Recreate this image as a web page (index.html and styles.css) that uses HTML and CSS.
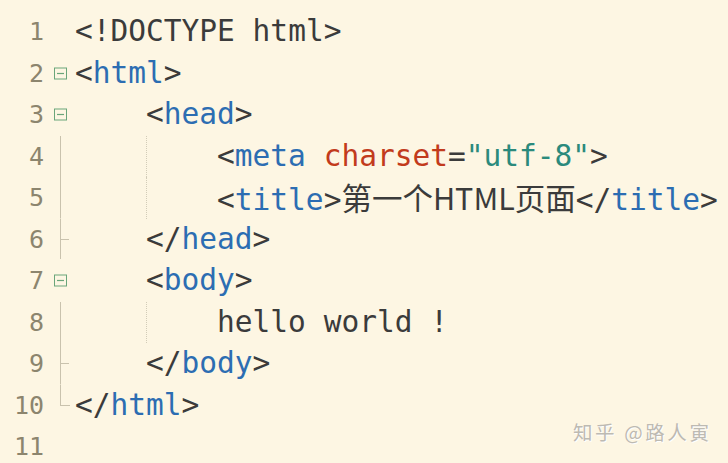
FILE: index.html
```html
<!DOCTYPE html>
<html lang="zh">
<head>
<meta charset="utf-8">
<title>code</title>
<link rel="stylesheet" href="styles.css">
</head>
<body>
<div class="editor">
  <div class="line"><span class="num">1</span><span class="fold"></span><span class="code"><span class="p">&lt;!DOCTYPE html&gt;</span></span></div>
  <div class="line"><span class="num">2</span><span class="fold"><svg width="31" height="41.5"><rect x="10.5" y="15" width="12" height="11" class="box"/><line x1="13" y1="20.5" x2="20" y2="20.5" class="mk"/></svg></span><span class="code"><span class="p">&lt;</span><span class="t">html</span><span class="p">&gt;</span></span></div>
  <div class="line"><span class="num">3</span><span class="fold"><svg width="31" height="41.5"><rect x="10.5" y="15" width="12" height="11" class="box"/><line x1="13" y1="20.5" x2="20" y2="20.5" class="mk"/></svg></span><span class="code"><span class="sp"></span><span class="p">&lt;</span><span class="t">head</span><span class="p">&gt;</span></span></div>
  <div class="line"><span class="num">4</span><span class="fold"><svg width="31" height="41.5"><line x1="16.5" y1="0" x2="16.5" y2="41.5" class="gl"/></svg></span><span class="code"><span class="sp"></span><span class="sp guide"></span><span class="p">&lt;</span><span class="t">meta</span> <span class="a">charset</span><span class="p">=</span><span class="s">"utf-8"</span><span class="p">&gt;</span></span></div>
  <div class="line"><span class="num">5</span><span class="fold"><svg width="31" height="41.5"><line x1="16.5" y1="0" x2="16.5" y2="41.5" class="gl"/></svg></span><span class="code"><span class="sp"></span><span class="sp guide short"></span><span class="p">&lt;</span><span class="t">title</span><span class="p">&gt;</span><span class="cjk">第一个HTML页面</span><span class="p">&lt;/</span><span class="t">title</span><span class="p">&gt;</span></span></div>
  <div class="line"><span class="num">6</span><span class="fold"><svg width="31" height="41.5"><line x1="16.5" y1="0" x2="16.5" y2="40" class="gl"/><line x1="16.5" y1="20.5" x2="25" y2="20.5" class="gl"/></svg></span><span class="code"><span class="sp"></span><span class="p">&lt;/</span><span class="t">head</span><span class="p">&gt;</span></span></div>
  <div class="line"><span class="num">7</span><span class="fold"><svg width="31" height="41.5"><rect x="10.5" y="15" width="12" height="11" class="box"/><line x1="13" y1="20.5" x2="20" y2="20.5" class="mk"/></svg></span><span class="code"><span class="sp"></span><span class="p">&lt;</span><span class="t">body</span><span class="p">&gt;</span></span></div>
  <div class="line"><span class="num">8</span><span class="fold"><svg width="31" height="41.5"><line x1="16.5" y1="0" x2="16.5" y2="41.5" class="gl"/></svg></span><span class="code"><span class="sp"></span><span class="sp guide short"></span><span class="p">hello world !</span></span></div>
  <div class="line"><span class="num">9</span><span class="fold"><svg width="31" height="41.5"><line x1="16.5" y1="0" x2="16.5" y2="41.5" class="gl"/><line x1="16.5" y1="20.5" x2="25" y2="20.5" class="gl"/></svg></span><span class="code"><span class="sp"></span><span class="p">&lt;/</span><span class="t">body</span><span class="p">&gt;</span></span></div>
  <div class="line"><span class="num">10</span><span class="fold"><svg width="31" height="41.5"><line x1="16.5" y1="0" x2="16.5" y2="21" class="gl"/><line x1="16.5" y1="20.5" x2="26" y2="20.5" class="gl"/></svg></span><span class="code"><span class="p">&lt;/</span><span class="t">html</span><span class="p">&gt;</span></span></div>
  <div class="line"><span class="num">11</span><span class="fold"></span><span class="code"></span></div>
</div>
<div class="mark">知乎 @路人寅</div>
</body>
</html>
```
FILE: styles.css
```css
html, body {
  margin: 0;
  padding: 0;
  background: #fdf6e3;
  width: 728px;
  height: 463px;
  overflow: hidden;
}
.editor {
  padding-top: 11px;
  font-family: "DejaVu Sans Mono", "Noto Sans CJK SC", monospace;
}
.line {
  display: flex;
  height: 41.5px;
}
.num {
  width: 44px;
  flex: none;
  text-align: right;
  font-size: 25px;
  color: #8c856e;
  line-height: 41.5px;
}
.fold {
  width: 31px;
  height: 41.5px;
  flex: none;
}
.fold svg { display: block; }
.box { fill: none; stroke: #6aa57a; stroke-width: 1; }
.mk { stroke: #6aa57a; stroke-width: 1.2; }
.gl { stroke: #c9c2ad; stroke-width: 1; }
.code {
  display: block;
  font-size: 29.5px;
  white-space: pre;
  line-height: 41.5px;
  height: 41.5px;
}
.sp {
  display: inline-block;
  width: 4ch;
  height: 41.5px;
  vertical-align: top;
}
.guide {
  border-left: 1px dotted #d2ccb8;
  box-sizing: border-box;
}
.p { color: #3b3b3b; }
.t { color: #2c6db2; }
.a { color: #c23b1c; }
.s { color: #2b8a7c; }
.cjk {
  font-family: "Noto Sans CJK SC", sans-serif;
  font-size: 30.5px;
  color: #3b3b3b;
}
.mark {
  position: absolute;
  left: 573px;
  top: 417px;
  font-family: "Noto Sans CJK SC", sans-serif;
  font-size: 19.5px;
  color: #bdbab2;
  letter-spacing: 2.6px;
  text-shadow: 1px 1px 0 #fff;
}
```
